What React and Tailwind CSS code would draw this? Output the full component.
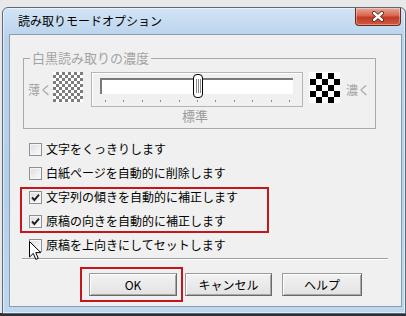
import React from 'react'

const options = [
  { label: '文字をくっきりします', checked: false },
  { label: '白紙ページを自動的に削除します', checked: false },
  { label: '文字列の傾きを自動的に補正します', checked: true },
  { label: '原稿の向きを自動的に補正します', checked: true },
  { label: '原稿を上向きにしてセットします', checked: false },
]

const ticks = Array.from({ length: 11 }, (_, i) => i)

function CheckBox({ checked }) {
  return (
    <span className="flex h-[13px] w-[13px] shrink-0 items-center justify-center border border-[#8e8f8f] bg-[linear-gradient(135deg,#dcdcdc,#fdfdfd)] shadow-[inset_0_0_0_1px_#f6f6f6]">
      {checked && (
        <svg width="9" height="9" viewBox="0 0 9 9">
          <path d="M1 4.5 L3.4 7 L8 1.6" fill="none" stroke="#1c1c1c" strokeWidth="1.9" />
        </svg>
      )}
    </span>
  )
}

function Btn({ className, children }) {
  return (
    <button
      className={`flex h-[23px] items-center justify-center border border-[#9a9a9a] border-b-[#6a6a6a] border-r-[#6a6a6a] bg-[linear-gradient(#f3f3f3,#e2e2e2)] text-[12px] leading-none text-black shadow-[inset_1px_1px_0_#ffffff,inset_-1px_-1px_0_#a8a8a8] ${className}`}
    >
      {children}
    </button>
  )
}

export default function App() {
  return (
    <div className="flex h-[316px] w-[406px] flex-col overflow-hidden bg-[linear-gradient(to_bottom,#e8e8e8_0,#e8e8e8_313px,#2c2f33_313px)] pt-[7px] font-['Noto_Sans_CJK_JP','Liberation_Sans',sans-serif]">
      {/* window */}
      <div className="ml-[2px] flex h-[307px] w-[404px] flex-col rounded-t-[6px] border border-[#5a6a7a] bg-[linear-gradient(180deg,#d2e4f5_0,#b9d3ec_30px,#b4cfe8_60%,#bdd8ee)] pl-[6px] pr-[3px] pb-[6px] shadow-[inset_0_0_0_1px_rgba(255,255,255,0.55)]">
        {/* title bar */}
        <div className="flex h-[26px] items-center justify-between">
          <span className="pl-[9px] text-[12px] leading-none text-black">読み取りモードオプション</span>
          <div className="mr-[1px] flex h-[18px] w-[46px] items-center justify-center self-start rounded-b-[4px] border border-t-0 border-[#6b2a1f] bg-[linear-gradient(#eaa998,#d8654f_45%,#c23b24_55%,#cf5a3f)] shadow-[inset_0_0_0_1px_rgba(255,255,255,0.35)]">
            <svg width="14" height="11" viewBox="0 0 14 11">
              <path d="M3 2 L11 9 M11 2 L3 9" stroke="#5b1c12" strokeWidth="4" strokeLinecap="round" />
              <path d="M3 2 L11 9 M11 2 L3 9" stroke="#ffffff" strokeWidth="2.4" strokeLinecap="round" />
            </svg>
          </div>
        </div>

        {/* client */}
        <div className="relative flex h-[273px] w-[393px] flex-col border border-[#8a9db0] bg-[#f0f0f0]">
          {/* group box */}
          <div className="ml-[13px] mt-[23px] flex h-[71px] w-[353px] flex-col border border-[#a9a9a9]">
            <span className="-mt-[9px] ml-[6px] w-fit bg-[#f0f0f0] px-[2px] text-[13px] leading-[16px] text-[#a3a3a3]">白黒読み取りの濃度</span>
            <div className="mt-[6px] flex items-start">
              <span className="ml-[4px] mt-[11px] w-[25px] text-[12px] leading-[14px] text-[#a3a3a3]">薄く</span>
              <div className="h-[30px] w-[30px] bg-[conic-gradient(#7d7d7d_25%,#ffffff_0_50%,#7d7d7d_0_75%,#ffffff_0)] bg-[length:6px_6px]" />
              {/* slider */}
              <div className="ml-[8px] flex flex-col">
                <div className="relative flex h-[35px] w-[212px] flex-col border border-[#b5b5b5] shadow-[inset_1px_1px_0_#ffffff]">
                  <div className="ml-[8px] mt-[5px] h-[16px] w-[193px] border-l-2 border-t-2 border-[#7a7a7a] border-b-[#e4e4e4] border-r-[#e4e4e4] bg-white" />
                  <div className="ml-[13px] mt-[6px] flex w-[185px] justify-between">
                    {ticks.map((t) => (
                      <span key={t} className="h-[2px] w-[1px] bg-[#8c8c8c]" />
                    ))}
                  </div>
                  <div className="absolute left-[101px] top-[1px] flex h-[24px] w-[10px] items-center justify-center gap-[1px] rounded-[4px] border border-black bg-white">
                    <span className="h-[14px] w-[1px] bg-[#8a8a8a]" />
                    <span className="h-[14px] w-[1px] bg-[#8a8a8a]" />
                    <span className="h-[14px] w-[1px] bg-[#8a8a8a]" />
                  </div>
                </div>
                <span className="ml-[91px] mt-[1px] text-[13px] leading-[15px] text-[#9a9a9a]">標準</span>
              </div>
              <div className="ml-[6px] flex h-[31px] w-[31px] items-center justify-center bg-white">
                <div className="h-[30px] w-[30px] bg-[conic-gradient(#000000_25%,#ffffff_0_50%,#000000_0_75%,#ffffff_0)] bg-[length:12px_12px]" />
              </div>
              <span className="ml-[6px] mt-[11px] text-[12px] leading-[14px] text-[#a3a3a3]">濃く</span>
            </div>
          </div>

          {/* options */}
          <div className="mt-[8px] flex flex-col pl-[19px]">
            {options.map((o) => (
              <label key={o.label} className="flex h-[24px] items-center gap-[4px]">
                <CheckBox checked={o.checked} />
                <span className="text-[12px] leading-none text-black">{o.label}</span>
              </label>
            ))}
          </div>

          {/* separator */}
          <div className="ml-[12px] mt-[1px] h-[2px] w-[366px] border-t border-[#a0a0a0] bg-white" />

          {/* buttons */}
          <div className="ml-[79px] mt-[13px] flex">
            <Btn className="w-[88px] border-[#5a5a5a] border-b-[#3c3c3c] border-r-[#3c3c3c]">OK</Btn>
            <Btn className="ml-[8px] w-[87px]">キャンセル</Btn>
            <Btn className="ml-[10px] w-[80px]">ヘルプ</Btn>
          </div>

          {/* annotations */}
          <div className="absolute left-[10px] top-[152px] h-[46px] w-[249px] border-2 border-[#c4161c]" />
          <div className="absolute left-[70px] top-[232px] h-[35px] w-[103px] border-2 border-[#c4161c]" />

          {/* mouse cursor */}
          <svg className="absolute left-[19px] top-[206px]" width="13" height="20" viewBox="0 0 13 20">
            <path d="M0.5 0.5 L0.5 16 L4.3 12.4 L6.8 18.4 L9.2 17.4 L6.8 11.6 L11.8 11.6 Z" fill="#ffffff" stroke="#000000" strokeWidth="1" strokeLinejoin="round" />
          </svg>
        </div>
      </div>
    </div>
  )
}
